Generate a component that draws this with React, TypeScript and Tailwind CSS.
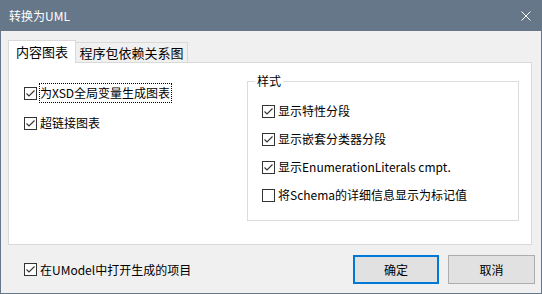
import React from "react";

const FONT = { fontFamily: '"Noto Sans CJK SC", "Noto Sans", sans-serif' };

function CheckBox({
  label,
  checked,
  focused,
}: {
  label: string;
  checked?: boolean;
  focused?: boolean;
}) {
  return (
    <div className="flex h-[20px] items-center">
      <span className="flex h-[13px] w-[13px] items-center justify-center border border-[#333333] bg-white">
        {checked && (
          <svg width="11" height="11" viewBox="0 0 11 11">
            <polyline
              points="1.5,5.5 4,8 9.5,2.5"
              fill="none"
              stroke="#333333"
              strokeWidth="1.1"
            />
          </svg>
        )}
      </span>
      <span
        className={`ml-[2px] flex h-[20px] items-center border pr-[1px] text-[12px] leading-[16px] text-black ${
          focused ? "border-dotted border-black" : "border-transparent"
        }`}
      >
        {label}
      </span>
    </div>
  );
}

export default function App() {
  return (
    <div
      className="flex h-[294px] w-[542px] flex-col border border-[#66778a] bg-[#f0f0f0]"
      style={FONT}
    >
      {/* title bar */}
      <div className="flex h-[30px] items-center justify-between bg-[#66778a] pl-[8px] pr-[10px]">
        <span className="text-[12px] leading-[16px] text-white">转换为UML</span>
        <svg width="10" height="10" viewBox="0 0 10 10">
          <path d="M0.5 0.5 L9.5 9.5 M9.5 0.5 L0.5 9.5" stroke="#ffffff" strokeWidth="1" />
        </svg>
      </div>

      <div className="px-[7px]">
        {/* tabs */}
        <div className="mt-[9px] flex items-end">
          <div className="relative z-10 -mb-px flex h-[23px] w-[68px] items-center justify-center border border-b-0 border-[#d9d9d9] bg-white pb-[1px] text-[13px] leading-[16px] text-black">
            内容图表
          </div>
          <div className="flex h-[20px] w-[112px] items-center justify-center border-t border-r border-[#d9d9d9] bg-[#f0f0f0] text-[13px] leading-[16px] text-black">
            程序包依赖关系图
          </div>
        </div>

        {/* tab panel */}
        <div className="flex h-[183px] w-[524px] justify-between border border-[#d9d9d9] bg-white">
          <div className="flex flex-col gap-[10px] pl-[15px] pt-[20px]">
            <CheckBox label="为XSD全局变量生成图表" checked focused />
            <CheckBox label="超链接图表" checked />
          </div>

          <fieldset className="mr-[12px] mt-[10px] h-[148px] w-[272px] border border-[#dcdcdc] p-0">
            <legend className="ml-[7px] px-[2px] text-[12px] leading-[16px] text-black">样式</legend>
            <div className="mt-[12px] flex flex-col gap-[8px] pl-[14px]">
              <CheckBox label="显示特性分段" checked />
              <CheckBox label="显示嵌套分类器分段" checked />
              <CheckBox label="显示EnumerationLiterals cmpt." checked />
              <CheckBox label="将Schema的详细信息显示为标记值" />
            </div>
          </fieldset>
        </div>

        {/* bottom row */}
        <div className="mt-[10px] flex h-[29px] items-center justify-between">
          <div className="ml-[16px]">
            <CheckBox label="在UModel中打开生成的项目" checked />
          </div>
          <div className="mr-[-1px] flex gap-[9px]">
            <button className="flex h-[29px] w-[86px] items-center justify-center border-2 border-[#0078d7] bg-[#e1e1e1] text-[12px] leading-[16px] text-black">
              确定
            </button>
            <button className="flex h-[29px] w-[87px] items-center justify-center border border-[#adadad] bg-[#e1e1e1] text-[12px] leading-[16px] text-black">
              取消
            </button>
          </div>
        </div>
      </div>
    </div>
  );
}
